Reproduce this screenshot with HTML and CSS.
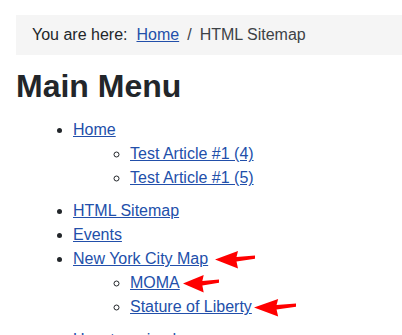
FILE: index.html
```html
<!DOCTYPE html>
<html lang="en">
<head>
  <meta charset="UTF-8">
  <meta name="viewport" content="width=device-width, initial-scale=1.0">
  <title>HTML Sitemap</title>
  <link rel="stylesheet" href="styles.css">
</head>
<body>
  <div class="page">
    <nav class="breadcrumb">
      <span class="breadcrumb-label">You are here:</span>
      <a href="#">Home</a>
      <span class="breadcrumb-item">HTML Sitemap</span>
    </nav>

    <h1>Main Menu</h1>

    <ul class="sitemap">
      <li>
        <a href="#">Home</a>
        <ul>
          <li><a href="#">Test Article #1 (4)</a></li>
          <li><a href="#">Test Article #1 (5)</a></li>
        </ul>
      </li>
      <li><a href="#">HTML Sitemap</a></li>
      <li><a href="#">Events</a></li>
      <li>
        <a href="#">New York City Map</a>
        <svg class="arrow arrow-gap" viewBox="0 0 40 18" preserveAspectRatio="none"><polygon points="0,8.5 23,0 21.5,6 40,4.5 40,7.8 21.5,10.5 23,17.5" /></svg>
        <ul>
          <li><a href="#">MOMA</a><svg class="arrow arrow-short" viewBox="0 0 40 18" preserveAspectRatio="none"><polygon points="0,8.5 23,0 21.5,6 40,4.5 40,7.8 21.5,10.5 23,17.5" /></svg></li>
          <li><a href="#">Stature of Liberty</a><svg class="arrow arrow-long" viewBox="0 0 40 18" preserveAspectRatio="none"><polygon points="0,8.5 23,0 21.5,6 40,4.5 40,7.8 21.5,10.5 23,17.5" /></svg></li>
        </ul>
      </li>
      <li><a href="#">Uncategorised</a></li>
    </ul>
  </div>
</body>
</html>
```

FILE: styles.css
```css
body {
  margin: 0;
  font-family: 'Liberation Sans', Arial, sans-serif;
  font-size: 16px;
  line-height: 1.5;
  color: #22262a;
  background: #fff;
}

a {
  color: #224faa;
  text-decoration: underline;
}

.page {
  padding: 15px 0 0 16px;
}

/* breadcrumb bar */
.breadcrumb {
  display: flex;
  align-items: baseline;
  background: #f5f5f5;
  padding: 8px 16px;
  margin-bottom: 12px;
}

.breadcrumb-label {
  margin-right: 9px;
}

.breadcrumb-item {
  padding-left: 8px;
  color: #3d4247;
}

.breadcrumb-item::before {
  content: "/";
  padding-right: 8px;
}

h1 {
  font-size: 32px;
  line-height: 1.2;
  font-weight: 700;
  margin: 0 0 13px;
}

/* sitemap list */
.sitemap,
.sitemap ul {
  margin: 0;
  padding-left: 57px;
}

.sitemap ul {
  list-style: circle;
  margin-bottom: 9px;
}

/* red pointer arrows */
.arrow {
  height: 18px;
  width: 40px;
  fill: #ff0000;
  vertical-align: middle;
  margin-left: 3px;
}

.arrow-gap {
  margin-left: 2px;
}

.arrow-short {
  width: 36px;
}

.arrow-long {
  width: 42px;
  margin-left: 2px;
}
```
